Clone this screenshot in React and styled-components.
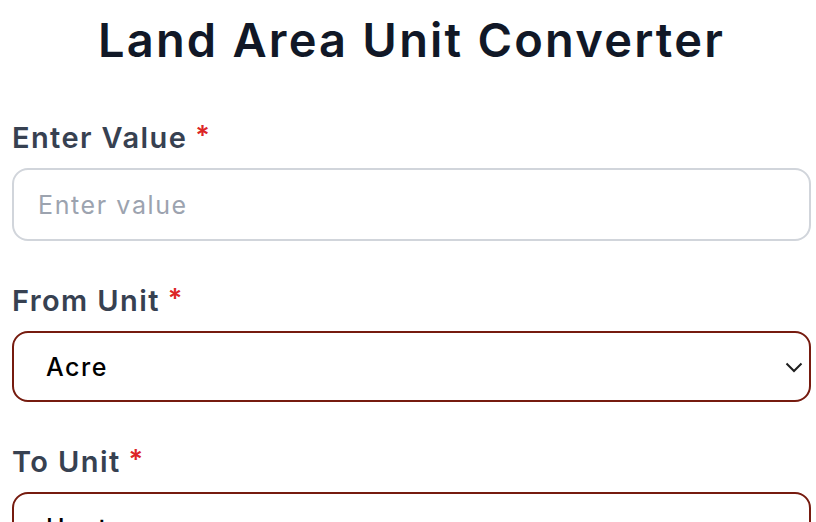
import React, { useState } from "react";
import styled, { createGlobalStyle } from "styled-components";

const GlobalStyle = createGlobalStyle`
  html, body {
    margin: 0;
    padding: 0;
    background: #ffffff;
    overflow: hidden;
  }
  body {
    font-family: "Inter", "Noto Sans", sans-serif;
  }
`;

const Page = styled.div`
  padding: 10px 5px 0 12px;
  display: flex;
  flex-direction: column;
`;

const Title = styled.h1`
  margin: 0 0 50px 0;
  text-align: center;
  font-size: 47px;
  font-weight: 600;
  color: #111827;
  line-height: 60px;
  letter-spacing: 2.2px;
`;

const Field = styled.div`
  display: flex;
  flex-direction: column;
  margin-bottom: 42px;
`;

const Label = styled.label`
  font-size: 29px;
  font-weight: 600;
  color: #374151;
  line-height: 36px;
  margin-bottom: 12px;
  letter-spacing: 1.4px;
  display: flex;
  align-items: center;
  gap: 8px;
`;

const Star = styled.span`
  color: #dc2626;
  font-size: 27px;
  line-height: 30px;
  margin-top: -4px;
`;

const Input = styled.input`
  box-sizing: border-box;
  width: 100%;
  height: 73px;
  border: 2px solid #d1d5db;
  border-radius: 16px;
  padding: 0 24px;
  font-family: "Inter", "Noto Sans", sans-serif;
  font-size: 25px;
  letter-spacing: 1.6px;
  color: #111827;
  outline: none;

  &::placeholder {
    color: #9ca3af;
    font-weight: 400;
  }
`;

const SelectWrap = styled.div`
  position: relative;
  width: 100%;
`;

const Select = styled.select`
  box-sizing: border-box;
  width: 100%;
  height: 71px;
  border: 2px solid #761b0f;
  border-radius: 16px;
  padding: 0 50px 0 32px;
  font-family: "Inter", "Noto Sans", sans-serif;
  font-size: 25px;
  font-weight: 500;
  letter-spacing: 1.5px;
  color: #000000;
  background: #ffffff;
  appearance: none;
  -webkit-appearance: none;
  outline: none;
`;

const Chevron = styled.svg`
  position: absolute;
  right: 8px;
  top: 50%;
  transform: translateY(-50%);
  width: 18px;
  height: 12px;
  pointer-events: none;
`;

const units = ["Acre", "Hectare", "Square Meter", "Square Foot", "Bigha"];

const UnitSelect = ({ value, onChange }) => (
  <SelectWrap>
    <Select value={value} onChange={(e) => onChange(e.target.value)}>
      {units.map((u) => (
        <option key={u} value={u}>
          {u}
        </option>
      ))}
    </Select>
    <Chevron viewBox="0 0 18 12">
      <path d="M1.5 2.5 L9 10 L16.5 2.5" fill="none" stroke="#1f1f1f" strokeWidth="2" />
    </Chevron>
  </SelectWrap>
);

const App = () => {
  const [val, setVal] = useState("");
  const [from, setFrom] = useState("Acre");
  const [to, setTo] = useState("Hectare");

  return (
    <>
      <GlobalStyle />
      <Page>
        <Title>Land Area Unit Converter</Title>
        <Field>
          <Label>
            Enter Value <Star>*</Star>
          </Label>
          <Input
            placeholder="Enter value"
            value={val}
            onChange={(e) => setVal(e.target.value)}
          />
        </Field>
        <Field>
          <Label>
            From Unit <Star>*</Star>
          </Label>
          <UnitSelect value={from} onChange={setFrom} />
        </Field>
        <Field>
          <Label>
            To Unit <Star>*</Star>
          </Label>
          <UnitSelect value={to} onChange={setTo} />
        </Field>
      </Page>
    </>
  );
};

export default App;
